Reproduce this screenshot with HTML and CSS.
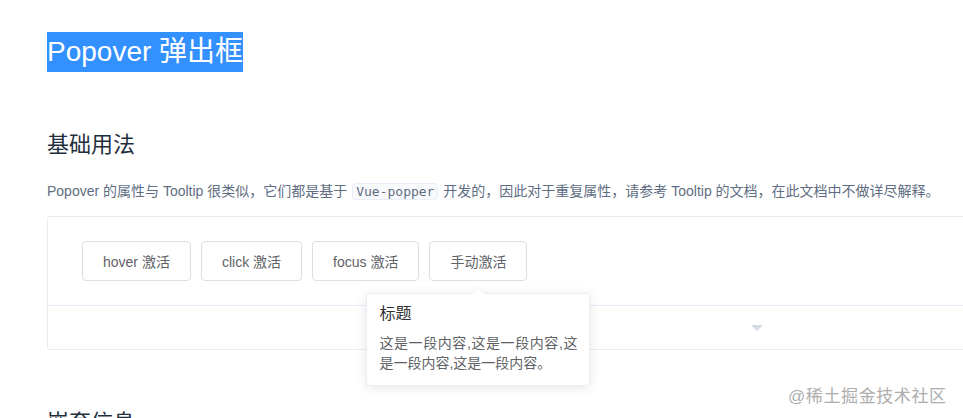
FILE: index.html
```html
<!DOCTYPE html>
<html lang="zh-CN">
<head>
    <meta charset="UTF-8">
    <meta name="viewport" content="width=device-width, initial-scale=1.0">
    <title>Popover 弹出框</title>
    <link rel="stylesheet" href="styles.css">
</head>
<body>

    <div class="page">
        <!-- Page title (selected) -->
        <h2 class="page-title"><span class="selected">Popover 弹出框</span></h2>

        <!-- Basic usage -->
        <h3>基础用法</h3>
        <p class="tip">Popover 的属性与 Tooltip 很类似，它们都是基于 <code>Vue-popper</code> 开发的，因此对于重复属性，请参考 Tooltip 的文档，在此文档中不做详尽解释。</p>

        <div class="demo-block">
            <div class="source">
                <button class="btn">hover 激活</button>
                <button class="btn">click 激活</button>
                <button class="btn">focus 激活</button>
                <span class="popover-ref"><button class="btn">手动激活</button><div class="popover">
                        <div class="popover-title">标题</div>
                        <div class="popover-body">这是一段内容,这是一段内容,这是一段内容,这是一段内容。</div>
                    </div></span>
            </div>
            <div class="control">
                <i class="caret"></i>
            </div>
        </div>

        <h3>嵌套信息</h3>
    </div>

    <div class="watermark">@稀土掘金技术社区</div>

</body>
</html>
```

FILE: styles.css
```css
* {
    margin: 0;
    padding: 0;
    box-sizing: border-box;
}

html, body {
    overflow: hidden;
}

body {
    font-family: 'Liberation Sans', 'Noto Sans CJK SC', sans-serif;
    background: #fff;
    color: #5e6d82;
}

.page {
    width: 1467px;
    padding: 32px 0 0 47px;
}

/* Title */
.page-title {
    font-size: 28px;
    font-weight: 400;
    line-height: 40px;
    color: #1f2f3d;
}

.selected {
    display: inline-block;
    background: #3390ff;
    color: #fff;
}

h3 {
    font-size: 22px;
    font-weight: 400;
    line-height: 33px;
    color: #1f2f3d;
    margin: 56px 0 20px;
}

.tip {
    font-size: 14px;
    line-height: 21px;
    margin-bottom: 14px;
    white-space: nowrap;
}

.tip code {
    font-family: 'DejaVu Sans Mono', monospace;
    font-size: 13px;
    color: #5e6d82;
    background: #f9fafc;
    border: 1px solid #eaeefb;
    border-radius: 4px;
    padding: 0 3px;
    margin: 0 1px;
}

/* Demo block */
.demo-block {
    border: 1px solid #ebebeb;
    border-radius: 3px;
}

.source {
    display: flex;
    gap: 10px;
    padding: 24px 34px;
}

.btn {
    height: 40px;
    padding: 0 20px;
    font-family: 'Liberation Sans', 'Noto Sans CJK SC', sans-serif;
    font-size: 14px;
    color: #606266;
    background: #fff;
    border: 1px solid #dcdfe6;
    border-radius: 4px;
    cursor: pointer;
}

.control {
    height: 44px;
    border-top: 1px solid #eaeefb;
    display: flex;
    align-items: center;
    justify-content: center;
}

.caret {
    width: 0;
    height: 0;
    border-left: 6px solid transparent;
    border-right: 6px solid transparent;
    border-top: 6px solid #d3dce6;
}

/* Popover */
.popover-ref {
    position: relative;
    display: flex;
}

.popover {
    position: absolute;
    top: calc(100% + 12px);
    left: 50%;
    transform: translateX(-50%);
    width: 224px;
    padding: 12px;
    background: #fff;
    border: 1px solid #ebeef5;
    border-radius: 4px;
    box-shadow: 0 2px 12px 0 rgba(0, 0, 0, 0.1);
    z-index: 2;
}

.popover::before,
.popover::after {
    content: "";
    position: absolute;
    left: 50%;
    width: 0;
    height: 0;
    border-style: solid;
    border-color: transparent;
}

.popover::before {
    top: -7px;
    margin-left: -7px;
    border-width: 0 7px 7px;
    border-bottom-color: #ebeef5;
}

.popover::after {
    top: -6px;
    margin-left: -6px;
    border-width: 0 6px 6px;
    border-bottom-color: #fff;
}

.popover-title {
    font-size: 16px;
    line-height: 1;
    color: #303133;
    margin-bottom: 12px;
}

.popover-body {
    font-size: 14px;
    line-height: 1.4;
    color: #606266;
    text-align: justify;
}

/* Watermark */
.watermark {
    position: absolute;
    left: 788px;
    top: 382px;
    font-size: 17px;
    color: #adadad;
    letter-spacing: 0.6px;
}
```
